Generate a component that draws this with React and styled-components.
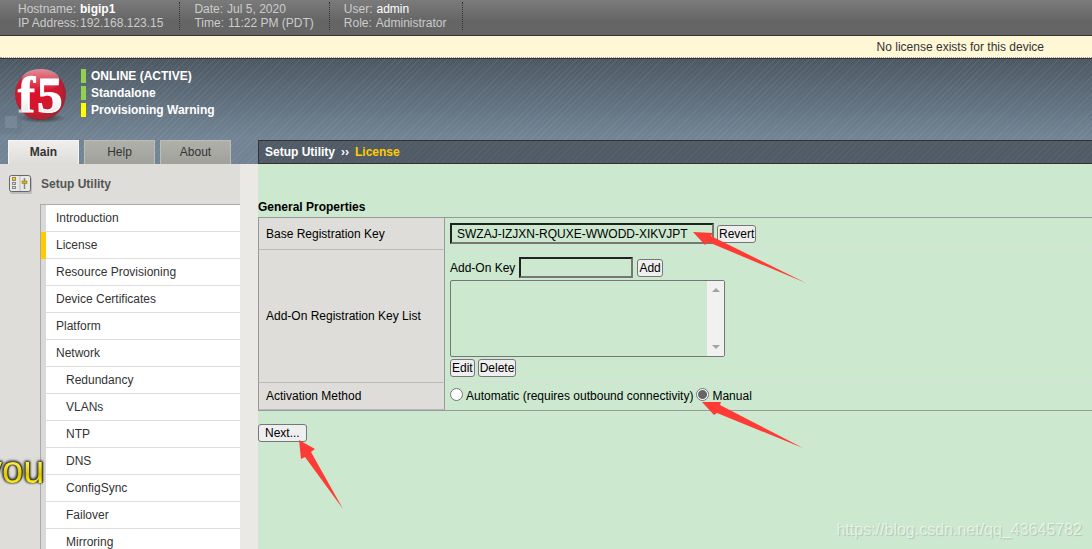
import React from "react";
import styled, { createGlobalStyle } from "styled-components";

const GlobalStyle = createGlobalStyle`
  * {
    box-sizing: border-box;
  }

  body {
    margin: 0;
    background: #eae9e5;
    color: #000;
    font-family: "Liberation Sans", Arial, sans-serif;
    font-size: 12px;
    line-height: 14px;
  }

  button,
  input,
  textarea {
    font: inherit;
    color: inherit;
  }
`;

const Page = styled.div`
  position: relative;
  display: flex;
  flex-direction: column;
  height: 100vh;
  overflow: hidden;
`;

const TopBar = styled.div`
  display: flex;
  padding: 2px 0 5px 18px;
  background: linear-gradient(#7b7b7b, #656565 60%);
  border-bottom: 1px solid #333;
  color: #ccc;
`;

const InfoBlock = styled.dl`
  display: grid;
  grid-template-columns: ${(props) => props.$columns};
  align-content: start;
  height: 28px;
  margin: 0 14px 0 0;
  padding-right: ${(props) => props.$space}px;
  border-right: 1px dotted #333;

  dd {
    margin: 0;
  }

  strong {
    color: #fff;
    font-weight: ${(props) => (props.$bold ? "bold" : "normal")};
  }
`;

const InfoLine = styled.div`
  display: flex;
  gap: 4px;
`;

const Notice = styled.div`
  padding: 4px 48px 3px 0;
  background: #fff7d6;
  border-bottom: 1px dotted #999;
  color: #333;
  text-align: right;
`;

const Header = styled.header`
  position: relative;
  display: flex;
  flex-direction: column;
  justify-content: space-between;
  height: 106px;
  border-top: 1px solid #333;
  background: repeating-linear-gradient(
      135deg,
      rgba(255, 255, 255, 0.06) 0 1px,
      transparent 1px 4px
    ),
    linear-gradient(#4d5863, #728494 75%);
`;

const Brand = styled.div`
  display: flex;
  gap: 13px;
  padding: 8px 0 0 13px;
`;

const StatusList = styled.ul`
  display: flex;
  flex-direction: column;
  gap: 3px;
  margin: 2px 0 0;
  padding: 0;
  list-style: none;
  color: #fff;
  font-weight: bold;
`;

const Status = styled.li`
  padding-left: 5px;
  border-left: 5px solid ${(props) => props.$color};
`;

const Corner = styled.svg`
  position: absolute;
  left: 0;
  bottom: 30px;
`;

const HeaderNav = styled.div`
  display: flex;
`;

const Tabs = styled.nav`
  display: flex;
  flex: 0 0 258px;
  gap: 5px;
  padding-left: 8px;
`;

const Tab = styled.a`
  width: 71px;
  height: 24px;
  padding-top: 4px;
  border: 1px solid ${(props) => (props.$active ? "#f5f5f3" : "#bcbcb8")};
  border-bottom: 0;
  background: ${(props) =>
    props.$active
      ? "linear-gradient(#efeeec, #deddd9)"
      : "linear-gradient(#b0b0ab, #a1a19c)"};
  color: #333;
  font-weight: ${(props) => (props.$active ? "bold" : "normal")};
  text-align: center;
  text-decoration: none;
`;

const Breadcrumb = styled.div`
  display: flex;
  flex: 1;
  gap: 6px;
  padding: 4px 6px;
  border: 1px solid #333;
  border-right: 0;
  background: repeating-linear-gradient(
      135deg,
      rgba(255, 255, 255, 0.04) 0 1px,
      transparent 1px 4px
    ),
    #505b66;
  color: #fff;
  font-weight: bold;

  em {
    color: #fc0;
    font-style: normal;
  }
`;

const Body = styled.div`
  display: flex;
  flex: 1;
  min-height: 0;
`;

const Sidebar = styled.aside`
  flex: 0 0 240px;
  margin-right: 18px;
  background: #deddd9;
`;

const SidebarTitle = styled.h2`
  display: flex;
  align-items: center;
  gap: 8px;
  height: 40px;
  margin: 0;
  padding-left: 8px;
  color: #555;
  font-size: 12px;
`;

const Menu = styled.ul`
  margin: 0 0 0 40px;
  padding: 0;
  border-top: 1px solid #aaa;
  border-left: 1px solid #aaa;
  list-style: none;
`;

const MenuLink = styled.a`
  display: block;
  height: 27px;
  padding: 6px 0 0 ${(props) => (props.$sub ? 20 : 10)}px;
  border-bottom: 1px solid #ddd;
  background: #fff;
  color: #333;
  text-decoration: none;
`;

const MenuItem = styled.li`
  padding-left: 5px;
  background: ${(props) => (props.$active ? "#fc0" : "#d9d9d9")};
`;

const Content = styled.main`
  flex: 1;
  padding-top: 36px;
  background: #cce8cf;
`;

const SectionTitle = styled.h1`
  margin: 0 0 3px;
  font-size: 12px;
  line-height: 14px;
`;

const Properties = styled.table`
  width: 100%;
  border-spacing: 0;
  border: 1px solid #999;
  border-right: 0;

  th {
    width: 186px;
    padding: 0 7px;
    border-right: 1px solid #999;
    border-bottom: 1px solid #bbb;
    background: #deddd9;
    font-weight: normal;
    text-align: left;
  }

  td {
    padding: 5px;
    border-bottom: 1px solid #d9dcd9;
  }

  tr:last-child td {
    border-bottom-color: transparent;
  }
`;

const Line = styled.div`
  display: flex;
  align-items: center;
  gap: ${(props) => props.$gap || 3}px;
`;

const KeyGroup = styled.div`
  display: flex;
  flex-direction: column;
  gap: 2px;
  padding-top: 2px;
`;

const TextInput = styled.input`
  width: ${(props) => props.$width}px;
  height: 21px;
  padding: 0 5px;
  border: 2px solid;
  border-color: #222 #767676 #767676 #222;
  border-radius: 0;
  background: transparent;
`;

const Button = styled.button`
  height: 18px;
  padding: 0 ${(props) => (props.$wide ? 6 : 1)}px;
  border: 1px solid #767676;
  border-radius: 3px;
  background: #efefef;
`;

const ListBox = styled.div`
  display: flex;
  width: 275px;
  height: 77px;
  border: 1px solid #767676;
  border-radius: 2px;

  textarea {
    flex: 1;
    min-width: 0;
    border: 0;
    background: transparent;
    overflow: hidden;
    resize: none;
  }
`;

const ScrollTrack = styled.div`
  display: flex;
  flex-direction: column;
  justify-content: space-between;
  align-items: center;
  width: 17px;
  padding: 6px 0;
  background: #f1f1f1;
`;

const Radio = styled.input`
  appearance: none;
  width: 13px;
  height: 13px;
  margin: 0 0 3px;
  border: 1px solid #767676;
  border-radius: 50%;
  background: #fff;

  &:checked {
    background: radial-gradient(circle, #666 0 4px, #fff 5px);
  }
`;

const Actions = styled.div`
  padding-top: 13px;
`;

const Arrows = styled.svg`
  position: absolute;
  top: 0;
  left: 0;
  pointer-events: none;
`;

const Sticker = styled.div`
  position: absolute;
  top: 448px;
  left: -17px;
  font-size: 38px;
  line-height: 44px;
  color: transparent;
  background: linear-gradient(#fff35a 30%, #d8c800 60%, #ffee20 80%);
  background-clip: text;
  filter: drop-shadow(1px 0 0 #443f10) drop-shadow(-1px 0 1px #333)
    drop-shadow(0 -1px 1px #333);
`;

const Watermark = styled.div`
  position: absolute;
  right: 10px;
  bottom: 10px;
  color: rgba(255, 255, 255, 0.6);
  font-size: 16px;
  line-height: 18px;
  text-shadow: 1px 1px 1px rgba(0, 0, 0, 0.15);
`;

const LogoImage = styled.svg`
  overflow: visible;
`;

const menu = [
  { label: "Introduction" },
  { label: "License", active: true },
  { label: "Resource Provisioning" },
  { label: "Device Certificates" },
  { label: "Platform" },
  { label: "Network" },
  { label: "Redundancy", sub: true },
  { label: "VLANs", sub: true },
  { label: "NTP", sub: true },
  { label: "DNS", sub: true },
  { label: "ConfigSync", sub: true },
  { label: "Failover", sub: true },
  { label: "Mirroring", sub: true }
];

const Logo = () => (
  <LogoImage width="55" height="57" viewBox="13 67 55 57">
    <defs>
      <radialGradient id="ball" cx="45%" cy="45%" r="60%">
        <stop offset="0" stopColor="#e00f2c" />
        <stop offset="0.7" stopColor="#cc1a30" />
        <stop offset="1" stopColor="#8d2a34" />
      </radialGradient>
      <linearGradient id="shine" x1="0" y1="0" x2="0" y2="1">
        <stop offset="0" stopColor="#fff" stopOpacity="0.5" />
        <stop offset="1" stopColor="#fff" stopOpacity="0" />
      </linearGradient>
      <linearGradient id="letters" x1="0" y1="0" x2="0" y2="1">
        <stop offset="0.5" stopColor="#fff" />
        <stop offset="1" stopColor="#ddd" />
      </linearGradient>
      <radialGradient id="shade">
        <stop offset="0" stopColor="#222" stopOpacity="0.8" />
        <stop offset="1" stopColor="#222" stopOpacity="0" />
      </radialGradient>
    </defs>
    <ellipse cx="42" cy="118" rx="24" ry="5" fill="url(#shade)" />
    <circle cx="40.500" cy="94.500" r="25.500" fill="url(#ball)" />
    <ellipse cx="40.500" cy="80" rx="19" ry="11" fill="url(#shine)" />
    <g
      fill="url(#letters)"
      fontFamily="Liberation Serif, serif"
      fontWeight="bold"
      fontSize="51"
      stroke="#fff"
      strokeWidth="1.2"
    >
      <text x="18" y="112">f</text>
      <text x="37" y="112">5</text>
    </g>
  </LogoImage>
);

const UtilityIcon = () => (
  <svg width="25" height="20" viewBox="0 0 25 20">
    <rect x="2" y="3" width="22" height="17" rx="2" fill="#bbb" />
    <rect x="1.500" y="1.500" width="21" height="16" rx="2" fill="#e8e8e6" stroke="#666" />
    <path d="M12 2v15" stroke="#bbb" />
    <rect x="4.500" y="3.500" width="3" height="3" fill="#fc0" stroke="#998c50" />
    <rect x="4.500" y="8.500" width="3" height="2" fill="#ddd" stroke="#888" />
    <rect x="4.500" y="12.500" width="3" height="2" fill="#ddd" stroke="#888" />
    <path d="M16.500 4v11" stroke="#888" strokeWidth="1.500" />
    <rect x="14" y="7" width="5" height="2.500" fill="#dfb400" stroke="#776a20" strokeWidth="0.500" />
  </svg>
);

class App extends React.Component {
  renderMenu = () => {
    return menu.map((item) => {
      return (
        <MenuItem key={item.label} $active={item.active}>
          <MenuLink href="#" $sub={item.sub}>
            {item.label}
          </MenuLink>
        </MenuItem>
      );
    });
  };

  render() {
    return (
      <Page>
        <GlobalStyle />
        <TopBar>
          <InfoBlock $columns="62px auto" $space={16} $bold>
            <dt>Hostname:</dt>
            <dd>
              <strong>bigip1</strong>
            </dd>
            <dt>IP Address:</dt>
            <dd>192.168.123.15</dd>
          </InfoBlock>
          <InfoBlock $columns="auto" $space={15}>
            <InfoLine>
              <dt>Date:</dt>
              <dd>Jul 5, 2020</dd>
            </InfoLine>
            <InfoLine>
              <dt>Time:</dt>
              <dd>11:22 PM (PDT)</dd>
            </InfoLine>
          </InfoBlock>
          <InfoBlock $columns="auto" $space={15}>
            <InfoLine>
              <dt>User:</dt>
              <dd>
                <strong>admin</strong>
              </dd>
            </InfoLine>
            <InfoLine>
              <dt>Role:</dt>
              <dd>Administrator</dd>
            </InfoLine>
          </InfoBlock>
        </TopBar>
        <Notice>No license exists for this device</Notice>
        <Header>
          <Corner width="23" height="26">
            <rect x="-4" width="26" height="26" rx="4" fill="#5f7080" opacity="0.3" />
            <rect x="5" y="8" width="12" height="12" fill="#9aaabb" opacity="0.3" />
          </Corner>
          <Brand>
            <Logo />
            <StatusList>
              <Status $color="#92d050">ONLINE (ACTIVE)</Status>
              <Status $color="#92d050">Standalone</Status>
              <Status $color="#ff0">Provisioning Warning</Status>
            </StatusList>
          </Brand>
          <HeaderNav>
            <Tabs>
              <Tab href="#" $active>
                Main
              </Tab>
              <Tab href="#">Help</Tab>
              <Tab href="#">About</Tab>
            </Tabs>
            <Breadcrumb>
              <span>Setup Utility</span>
              <span>››</span>
              <em>License</em>
            </Breadcrumb>
          </HeaderNav>
        </Header>
        <Body>
          <Sidebar>
            <SidebarTitle>
              <UtilityIcon />
              Setup Utility
            </SidebarTitle>
            <Menu>{this.renderMenu()}</Menu>
          </Sidebar>
          <Content>
            <SectionTitle>General Properties</SectionTitle>
            <Properties>
              <tbody>
                <tr>
                  <th scope="row">
                    <label htmlFor="base-key">Base Registration Key</label>
                  </th>
                  <td>
                    <Line>
                      <TextInput
                        id="base-key"
                        $width={264}
                        defaultValue="SWZAJ-IZJXN-RQUXE-WWODD-XIKVJPT"
                      />
                      <Button>Revert</Button>
                    </Line>
                  </td>
                </tr>
                <tr>
                  <th scope="row">
                    <label htmlFor="key-list">Add-On Registration Key List</label>
                  </th>
                  <td>
                    <KeyGroup>
                      <Line $gap={4}>
                        <label htmlFor="addon-key">Add-On Key</label>
                        <TextInput id="addon-key" $width={114} />
                        <Button>Add</Button>
                      </Line>
                      <ListBox>
                        <textarea id="key-list" />
                        <ScrollTrack>
                          <svg width="8" height="6">
                            <path d="M0 5L4 1L8 5Z" fill="#a3a3a3" />
                          </svg>
                          <svg width="8" height="6">
                            <path d="M0 1L4 5L8 1Z" fill="#a3a3a3" />
                          </svg>
                        </ScrollTrack>
                      </ListBox>
                      <Line>
                        <Button>Edit</Button>
                        <Button>Delete</Button>
                      </Line>
                    </KeyGroup>
                  </td>
                </tr>
                <tr>
                  <th scope="row">Activation Method</th>
                  <td>
                    <Line>
                      <Radio type="radio" name="method" id="automatic" />
                      <label htmlFor="automatic">
                        Automatic (requires outbound connectivity)
                      </label>
                      <Radio type="radio" name="method" id="manual" defaultChecked />
                      <label htmlFor="manual">Manual</label>
                    </Line>
                  </td>
                </tr>
              </tbody>
            </Properties>
            <Actions>
              <Button $wide>Next...</Button>
            </Actions>
          </Content>
        </Body>
        <Arrows width="820" height="520" fill="#ff3b36">
          <path d="M693 232L713 233L711 236L806 283L708 242L705 245Z" />
          <path d="M702 402L721 402L720 405L803 448L717 413L714 415Z" />
          <path d="M299 440L315 449L311 452L343 509L305 457L301 459Z" />
        </Arrows>
        <Sticker>you</Sticker>
        <Watermark>https://blog.csdn.net/qq_43645782</Watermark>
      </Page>
    );
  }
}

export default App;
